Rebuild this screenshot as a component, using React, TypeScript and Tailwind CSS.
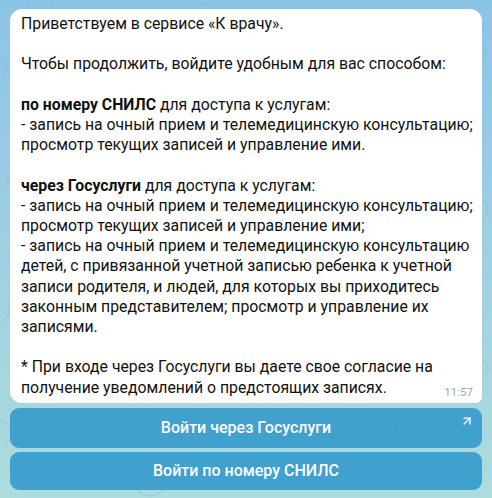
import { ArrowUpRight } from "lucide-react";

const font = { fontFamily: "Roboto, 'Noto Sans', sans-serif" };

function Line({ children }: { children?: React.ReactNode }) {
  return <p className="min-h-[20.2px] whitespace-nowrap">{children}</p>;
}

export default function App() {
  return (
    <div
      className="relative h-[498px] w-[492px] overflow-hidden bg-gradient-to-b from-[#8cc4e6] via-[#9fd0e2] to-[#acdcdc] px-[10px] pt-[9px]"
      style={font}
    >
      <svg className="pointer-events-none absolute inset-0 h-full w-full opacity-40" viewBox="0 0 492 498" fill="none" stroke="#6fb2c9" strokeWidth="1">
        <circle cx="40" cy="10" r="14" />
        <circle cx="385" cy="430" r="12" />
        <circle cx="150" cy="480" r="16" />
        <path d="M0 60c10 6 6 18 0 24M2 170c8 4 8 14 0 20M4 300c8 6 6 16-2 22M0 420c12 4 16 16 4 26" />
        <path d="M200 2c6 4 10 2 14-2M300 490c10-8 20-8 30 0M60 470l8 10 8-10M250 440l6 6" />
        <path d="M480 40c8 6 8 16 0 22M484 200c6 8 4 16-4 20M482 360c8 4 8 12 0 18" />
      </svg>

      <div className="relative rounded-[12px] rounded-br-[6px] bg-white pl-[11px] pr-[12px] pt-[5px] pb-[5px] text-[15.8px] leading-[20.2px] text-[#111]">
        <Line>Приветствуем в сервисе «К врачу».</Line>
        <Line />
        <Line>Чтобы продолжить, войдите удобным для вас способом:</Line>
        <Line />
        <Line>
          <b className="font-bold">по номеру СНИЛС</b> для доступа к услугам:
        </Line>
        <Line>- запись на очный прием и телемедицинскую консультацию;</Line>
        <Line>просмотр текущих записей и управление ими.</Line>
        <Line />
        <Line>
          <b className="font-bold">через Госуслуги</b> для доступа к услугам:
        </Line>
        <Line>- запись на очный прием и телемедицинскую консультацию;</Line>
        <Line>просмотр текущих записей и управление ими;</Line>
        <Line>- запись на очный прием и телемедицинскую консультацию</Line>
        <Line>детей, с привязанной учетной записью ребенка к учетной</Line>
        <Line>записи родителя, и людей, для которых вы приходитесь</Line>
        <Line>законным представителем; просмотр и управление их</Line>
        <Line>записями.</Line>
        <Line />
        <Line>* При входе через Госуслуги вы даете свое согласие на</Line>
        <div className="flex items-end justify-between">
          <p>получение уведомлений о предстоящих записях.</p>
          <span className="translate-x-[3px] translate-y-[1px] text-[11.5px] leading-[14px] text-[#a0a7ad]">11:57</span>
        </div>
      </div>

      <div className="relative mt-[5px] flex flex-col gap-[4px]">
        <button className="relative h-[40px] w-full rounded-[9px] bg-[#3a9dcc]/95 text-[16px] font-medium text-white">
          Войти через Госуслуги
          <ArrowUpRight className="absolute right-[8px] top-[6px] h-[14px] w-[14px]" strokeWidth={2.4} />
        </button>
        <button className="h-[38px] w-full rounded-[9px] bg-[#3a9dcc]/95 text-[16px] font-medium text-white">
          Войти по номеру СНИЛС
        </button>
      </div>
    </div>
  );
}
